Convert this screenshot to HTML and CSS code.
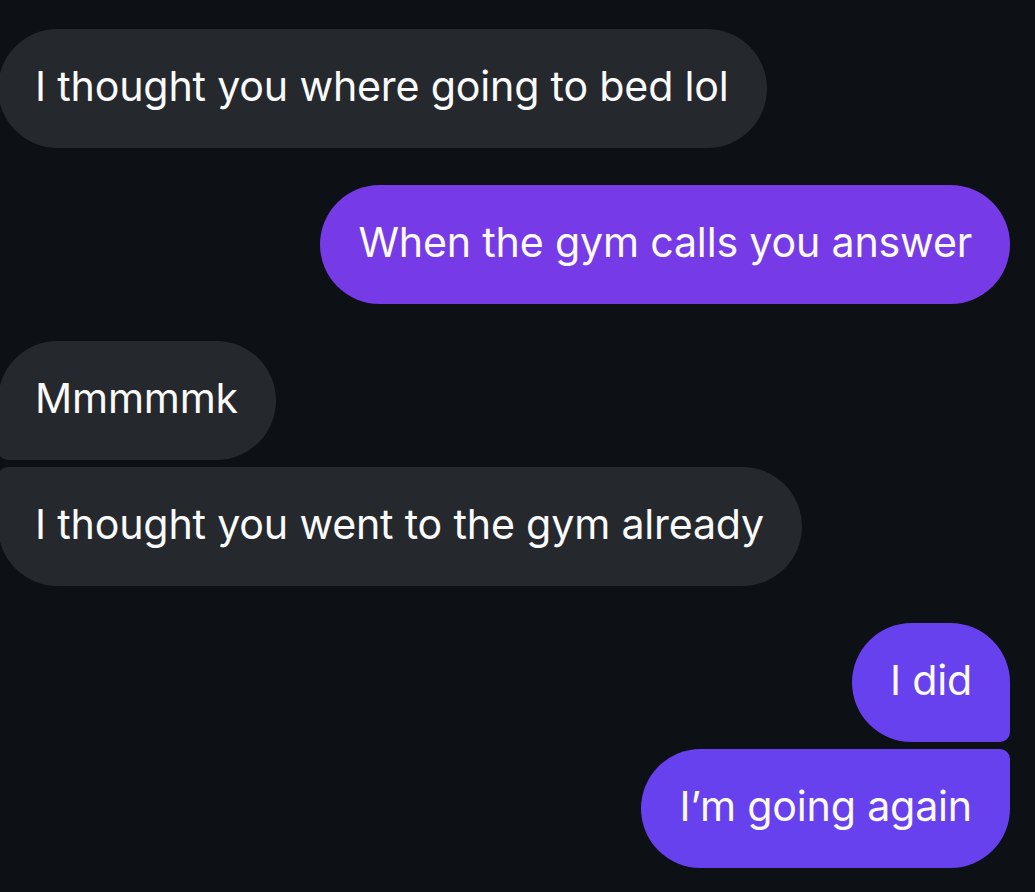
FILE: index.html
```html
<!DOCTYPE html>
<html>
<head>
<meta charset="utf-8">
<link rel="stylesheet" href="styles.css">
</head>
<body>
<div class="chat">
  <div class="group">
    <div class="bubble in">I thought you where going to bed lol</div>
  </div>
  <div class="group">
    <div class="bubble out out-a">When the gym calls you answer</div>
  </div>
  <div class="group">
    <div class="bubble in first">Mmmmmk</div>
    <div class="bubble in last">I thought you went to the gym already</div>
  </div>
  <div class="group">
    <div class="bubble out out-b first">I did</div>
    <div class="bubble out out-b last">I’m going again</div>
  </div>
</div>
</body>
</html>
```
FILE: styles.css
```css
html, body {
  margin: 0;
  padding: 0;
  background: #0d1014;
}
body {
  width: 1035px;
  height: 892px;
  overflow: hidden;
  font-family: "Inter", "Liberation Sans", sans-serif;
}
.chat {
  display: flex;
  flex-direction: column;
  gap: 37px;
  padding-top: 29px;
}
.group {
  display: flex;
  flex-direction: column;
  gap: 7px;
}
.bubble {
  box-sizing: border-box;
  height: 119px;
  display: flex;
  align-items: center;
  padding: 0 38px 5px 37px;
  border-radius: 60px;
  font-size: 41.2px;
  color: #fafafa;
  white-space: nowrap;
  letter-spacing: -0.2px;
}
.in {
  align-self: flex-start;
  margin-left: -2px;
  background: #25282d;
}
.out {
  align-self: flex-end;
  margin-right: 25px;
  padding: 0 38px 5px 38px;
}
.out-a { background: #763be7; }
.out-b { background: #6741ee; }
.in.first { border-bottom-left-radius: 10px; }
.in.last { border-top-left-radius: 10px; }
.out.first { border-bottom-right-radius: 10px; }
.out.last { border-top-right-radius: 10px; }
```
